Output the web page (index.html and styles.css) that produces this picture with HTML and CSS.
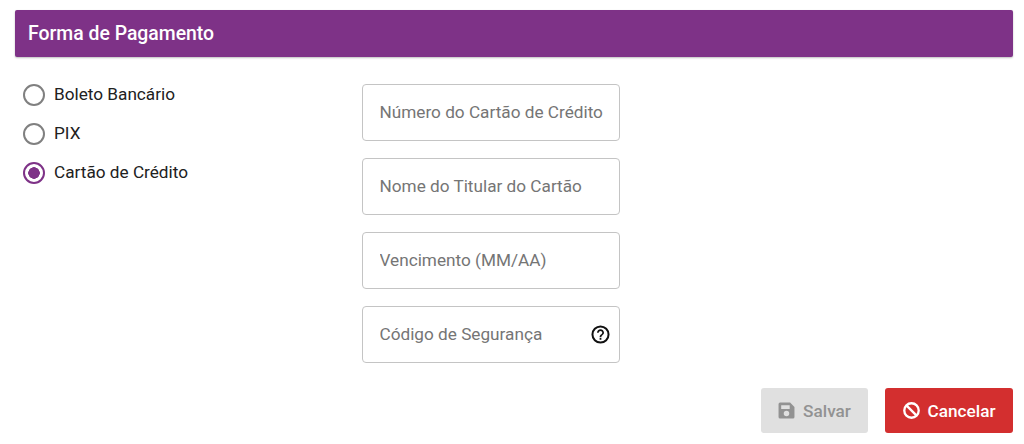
FILE: index.html
```html
<!DOCTYPE html>
<html lang="pt-BR">
<head>
    <meta charset="UTF-8">
    <meta name="viewport" content="width=device-width, initial-scale=1.0">
    <title>Forma de Pagamento</title>
    <link rel="stylesheet" href="styles.css">
</head>
<body>
  <div class="page">
    <h2 class="title-bar">Forma de Pagamento</h2>

    <div class="content">
      <div class="radio-group">
        <label class="radio-row">
          <input type="radio" name="forma" value="boleto">
          <span>Boleto Bancário</span>
        </label>
        <label class="radio-row">
          <input type="radio" name="forma" value="pix">
          <span>PIX</span>
        </label>
        <label class="radio-row">
          <input type="radio" name="forma" value="cartao" checked>
          <span>Cartão de Crédito</span>
        </label>
      </div>

      <form class="card-form">
        <input class="field" type="text" placeholder="Número do Cartão de Crédito">
        <input class="field" type="text" placeholder="Nome do Titular do Cartão">
        <input class="field" type="text" placeholder="Vencimento (MM/AA)">
        <div class="field field-icon">
          <input type="text" placeholder="Código de Segurança">
          <svg class="help-icon" viewBox="0 0 24 24" aria-hidden="true">
            <circle cx="12" cy="12" r="9.2" fill="none" stroke="currentColor" stroke-width="2.3"/>
            <path d="M11 18h2v-2h-2v2zm1-12c-2.21 0-4 1.79-4 4h2c0-1.1.9-2 2-2s2 .9 2 2c0 2-3 1.75-3 5h2c0-2.25 3-2.5 3-5 0-2.21-1.79-4-4-4z"/>
          </svg>
        </div>
      </form>
    </div>

    <div class="actions">
      <button class="btn btn-save" type="button" disabled>
        <svg viewBox="0 0 16 16" aria-hidden="true">
          <path fill-rule="evenodd" d="M2 0.5h9.4L15.5 4.6V14a1.5 1.5 0 0 1-1.5 1.5H2A1.5 1.5 0 0 1 .5 14V2A1.5 1.5 0 0 1 2 .5zM3 3v3.5h8V3zM8 8.2a2.6 2.6 0 1 0 0 5.2 2.6 2.6 0 0 0 0-5.2z"/>
        </svg>
        Salvar
      </button>
      <button class="btn btn-cancel" type="button">
        <svg viewBox="0 0 16 16" aria-hidden="true">
          <circle cx="8" cy="8" r="6.8" fill="none" stroke="currentColor" stroke-width="2.2"/>
          <line x1="3.2" y1="3.2" x2="12.8" y2="12.8" stroke="currentColor" stroke-width="2.2"/>
        </svg>
        Cancelar
      </button>
    </div>
  </div>
</body>
</html>
```

FILE: styles.css
```css
body {
    margin: 0;
    background: #fff;
    font-family: Roboto, Arial, sans-serif;
    color: #212121;
}

.page {
    padding: 10px 11px 0 15px;
}

.title-bar {
    margin: 0;
    height: 47px;
    padding-left: 13px;
    display: flex;
    align-items: center;
    background-color: #7e3287;
    border-radius: 2px;
    box-shadow: 0 1px 2px rgba(0, 0, 0, 0.25);
    color: #fff;
    font-size: 19.4px;
    font-weight: 500;
}

.content {
    display: flex;
    margin-top: 27px;
}

.radio-group {
    width: 347px;
    display: flex;
    flex-direction: column;
    gap: 17px;
}

.radio-row {
    display: flex;
    align-items: center;
    gap: 9px;
    height: 22px;
    margin-left: 8px;
    font-size: 17.2px;
    line-height: 20px;
}

.radio-row span {
    margin-top: -2px;
}

.radio-row input {
    appearance: none;
    margin: 0;
    width: 22px;
    height: 22px;
    border: 2px solid #808080;
    border-radius: 50%;
    background: #fff;
}

.radio-row input:checked {
    border-color: #7e3287;
    background: radial-gradient(circle, #7e3287 0, #7e3287 5.5px, #fff 6px);
}

.card-form {
    display: flex;
    flex-direction: column;
    gap: 17.5px;
    width: 258px;
}

.field {
    box-sizing: border-box;
    width: 100%;
    height: 56.5px;
    padding: 0 16.5px;
    border: 1px solid #c4c4c4;
    border-radius: 4px;
    background: #fff;
    font-family: inherit;
    font-size: 17.2px;
    color: #212121;
}

.field::placeholder,
.field-icon input::placeholder {
    color: #757575;
    opacity: 1;
}

.field-icon {
    display: flex;
    align-items: center;
    padding-right: 8.5px;
}

.field-icon input {
    flex: 1;
    min-width: 0;
    padding: 0;
    border: none;
    outline: none;
    font-family: inherit;
    font-size: 17.2px;
}

.help-icon {
    width: 21px;
    height: 21px;
    fill: #111;
    color: #111;
}

.actions {
    display: flex;
    justify-content: flex-end;
    gap: 17px;
    margin-top: 25.5px;
}

.btn {
    display: flex;
    align-items: center;
    justify-content: center;
    gap: 8px;
    height: 45px;
    padding: 0;
    border: none;
    border-radius: 3px;
    font-family: inherit;
    font-size: 17.2px;
    font-weight: 500;
    cursor: pointer;
}

.btn svg {
    width: 17px;
    height: 17px;
    fill: currentColor;
}

.btn-save {
    width: 107px;
    background-color: #e0e0e0;
    color: #929292;
}

.btn-cancel {
    width: 128px;
    background-color: #d32f2f;
    color: #fff;
}
```
